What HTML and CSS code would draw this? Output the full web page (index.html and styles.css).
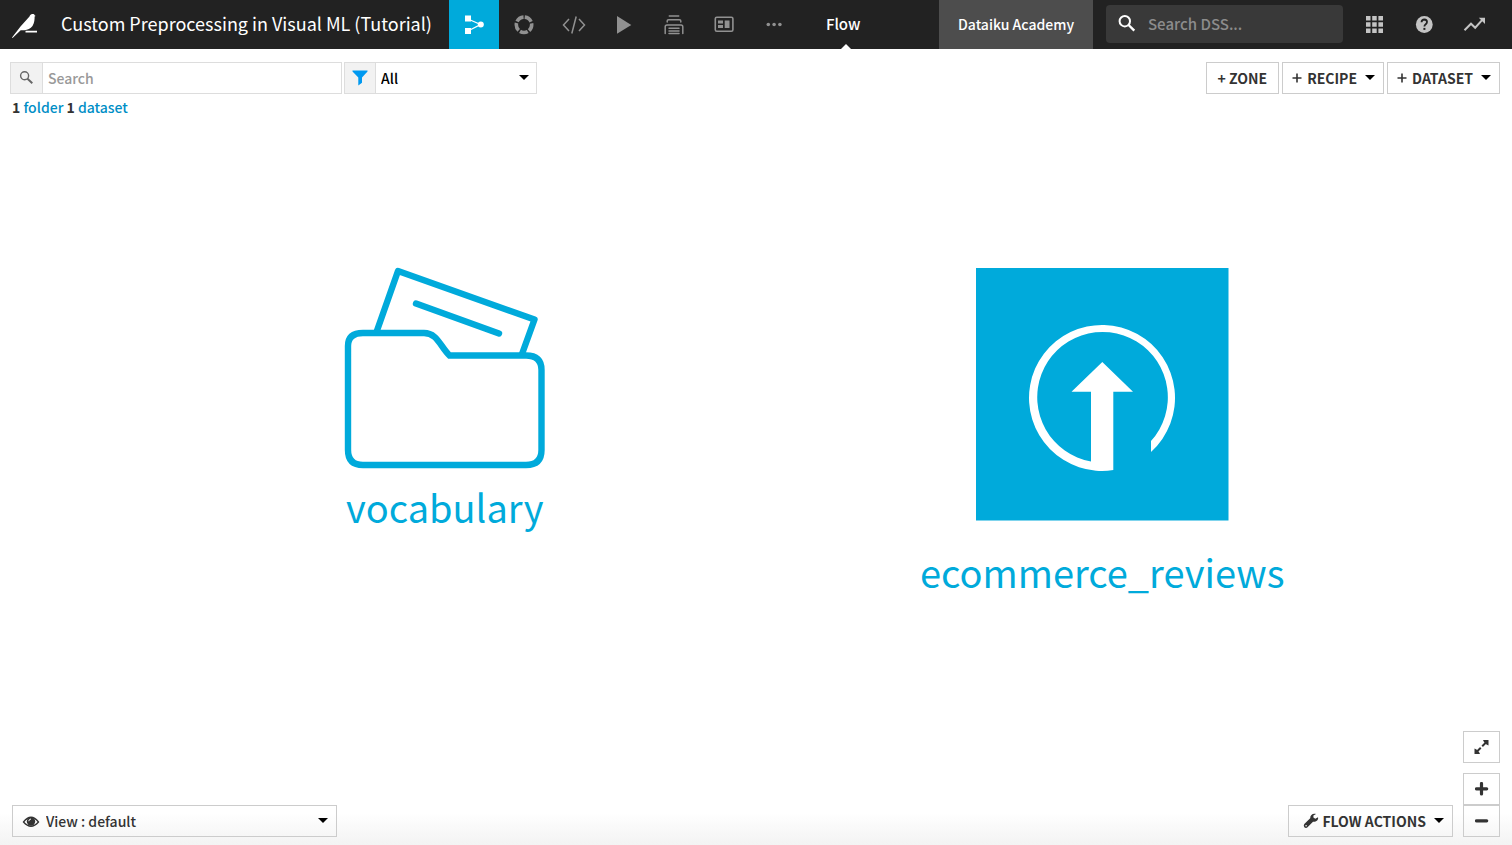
FILE: index.html
```html
<!DOCTYPE html>
<html lang="en">
<head>
<meta charset="utf-8">
<meta name="viewport" content="width=device-width, initial-scale=1">
<title>Custom Preprocessing in Visual ML (Tutorial)</title>
<link rel="stylesheet" href="styles.css">
</head>
<body>
<header class="topbar">
  <a class="logo" href="#" aria-label="Home">
    <svg width="26" height="26" viewBox="0 0 26 26" fill="#fff"><path d="M0 25.500L8.500 14.500L17.500 4.500C18 2.500 19.500 1.700 20.700 2C22 2 22.400 2.600 22.600 3.200L23.600 4L22.600 4.500C22.700 7 22.500 11 20.500 14C18.600 16.800 15.500 18 12.500 18.200L8.700 18.300L0.600 26ZM13.500 18.800H25V20.400H13.500Z"/></svg>
  </a>
  <h1 class="title">Custom Preprocessing in Visual ML (Tutorial)</h1>
  <nav class="tabs" aria-label="Project">
    <a class="tab active" href="#" aria-label="Flow">
      <svg width="20" height="20" viewBox="0 0 20 20"><path d="M4 4L16.500 9.500L4 16" fill="none" stroke="#fff" stroke-width="1.300"/><path d="M1 0.500H7V6.500H1ZM1 13H7V19H1Z" fill="#fff"/><circle cx="16.800" cy="9.600" r="3" fill="#fff"/></svg>
    </a>
    <a class="tab" href="#" aria-label="Lab">
      <svg width="20" height="20" viewBox="0 0 20 20"><circle cx="10" cy="9.800" r="7.700" fill="none" stroke="#919191" stroke-width="3.600" stroke-dasharray="8.100 1.576" stroke-dashoffset="-0.780" transform="rotate(-90 10 9.800)"/></svg>
    </a>
    <a class="tab" href="#" aria-label="Code">
      <svg width="24" height="20" viewBox="0 0 24 20" fill="none" stroke="#919191" stroke-width="1.500"><path d="M7 4L1.500 10L7 16M17 4L22.500 10L17 16M14.200 1.500L9.800 18.500"/></svg>
    </a>
    <a class="tab" href="#" aria-label="Jobs">
      <svg width="20" height="20" viewBox="0 0 20 20" fill="#919191"><path d="M3 1L17.300 9.900L3 18.800Z"/></svg>
    </a>
    <a class="tab" href="#" aria-label="Deployer">
      <svg width="20" height="20" viewBox="0 0 20 20" fill="none" stroke="#919191" stroke-width="1.500" stroke-linecap="round"><path d="M5.300 1H14.700M3.200 7V6Q3.200 4.800 4.500 4.800H15.500Q16.800 4.800 16.800 6V7M1.200 18.500V12Q1.200 10 3 10H17Q18.800 10 18.800 12V18.500M5 13.200H15M5 15.900H15M5 18.600H15"/></svg>
    </a>
    <a class="tab" href="#" aria-label="Dashboards">
      <svg width="20" height="20" viewBox="0 0 20 20"><rect x="1.300" y="2.300" width="17.600" height="13.900" rx="1.500" fill="none" stroke="#919191" stroke-width="1.600"/><path d="M4 5.500H9V8.500H4ZM4 10H9V13H4ZM10.700 5.500H15.500V13H10.700Z" fill="#919191"/></svg>
    </a>
    <a class="tab" href="#" aria-label="More">
      <svg width="20" height="20" viewBox="0 0 20 20" fill="#919191"><circle cx="4.300" cy="9.500" r="1.800"/><circle cx="10.100" cy="9.500" r="1.800"/><circle cx="15.900" cy="9.500" r="1.800"/></svg>
    </a>
  </nav>
  <a class="section" href="#">Flow</a>
  <a class="academy" href="#">Dataiku Academy</a>
  <label class="dss-search">
    <svg width="20" height="20" viewBox="0 0 20 20" fill="none" stroke="#fff" stroke-width="2"><circle cx="7.800" cy="7.200" r="5.200"/><path d="M11.600 11L17.300 16.700" stroke-width="2.400"/></svg>
    <input type="search" placeholder="Search DSS..." aria-label="Search DSS">
  </label>
  <div class="tools">
    <button class="tool" aria-label="Applications"><svg width="20" height="20" viewBox="0 0 20 20" fill="#c4c4c4"><path d="M2 1H6.500V5.500H2ZM8.200 1H12.700V5.500H8.200ZM14.400 1H19V5.500H14.400ZM2 7.200H6.500V11.700H2ZM8.200 7.200H12.700V11.700H8.200ZM14.400 7.200H19V11.700H14.400ZM2 13.400H6.500V17.900H2ZM8.200 13.400H12.700V17.900H8.200ZM14.400 13.400H19V17.900H14.400Z"/></svg></button>
    <button class="tool" aria-label="Help"><svg width="20" height="20" viewBox="0 0 20 20"><circle cx="10.300" cy="9.500" r="8.400" fill="#c4c4c4"/><path d="M7.500 7.200Q7.700 4.500 10.400 4.500Q13 4.700 13 7.100Q13 8.400 11.500 9.400Q10.400 10.100 10.400 11.600" fill="none" stroke="#222" stroke-width="1.800"/><path d="M9.400 12.900H11.400V14.900H9.400Z" fill="#222"/></svg></button>
    <button class="tool" aria-label="Activity"><svg width="22" height="20" viewBox="0 0 22 20"><path d="M1.500 15.200L8 8.700L12.200 12.700L19.500 4.700" fill="none" stroke="#c4c4c4" stroke-width="2"/><path d="M15.800 2.800H22V9Z" fill="#c4c4c4"/></svg></button>
  </div>
</header>

<main class="flow">
  <div class="toolbar">
    <div class="filters">
      <label class="field search">
        <span class="addon"><svg width="16" height="16" viewBox="0 0 16 16" fill="none" stroke="#666" stroke-width="1.400"><circle cx="5.600" cy="5.800" r="4"/><path d="M8.500 8.700L13.300 13.300" stroke-width="1.900"/></svg></span>
        <input type="text" placeholder="Search" aria-label="Search flow">
      </label>
      <div class="field type">
        <span class="addon"><svg width="16" height="16" viewBox="0 0 16 16" fill="#0099f0"><path d="M0.500 0.500H15.500V1.500L10 7.500V12.800L6.300 15.500V7.500L0.500 1.500Z"/></svg></span>
        <select aria-label="Filter by type"><option>All</option></select>
        <svg class="caret" width="10" height="5" viewBox="0 0 10 5"><path d="M0 0H10L5 5Z"/></svg>
      </div>
    </div>
    <div class="actions">
      <button class="btn"><span>+ ZONE</span></button>
      <button class="btn wide"><svg width="10" height="10" viewBox="0 0 10 10"><path d="M5 0.500V9.500M0.500 5H9.500" stroke="#333" stroke-width="1.600"/></svg><span>RECIPE</span><svg class="down" width="10" height="5" viewBox="0 0 10 5"><path d="M0 0H10L5 5Z"/></svg></button>
      <button class="btn wide"><svg width="10" height="10" viewBox="0 0 10 10"><path d="M5 0.500V9.500M0.500 5H9.500" stroke="#333" stroke-width="1.600"/></svg><span>DATASET</span><svg class="down" width="10" height="5" viewBox="0 0 10 5"><path d="M0 0H10L5 5Z"/></svg></button>
    </div>
  </div>
  <p class="summary"><b>1</b> <a href="#">folder</a> <b>1</b> <a href="#">dataset</a></p>

  <div class="graph">
    <a class="node folder" href="#">
      <svg width="202" height="202" viewBox="344 267 202 202" fill="none" stroke="#00aadb" stroke-width="6.400" stroke-linejoin="round"><path d="M376.500 332L398 271L534.500 319.500L522 354"/><path d="M416 303.500L499 333.500" stroke-linecap="round"/><path d="M348 346Q348 333 363 333H424C437 333 440 346 449.500 355.500H526Q541.500 355.500 541.500 370V450Q541.500 465 526 465H363Q348 465 348 450Z" stroke-linejoin="miter"/></svg>
      <span>vocabulary</span>
    </a>
    <a class="node dataset" href="#">
      <svg width="253" height="253" viewBox="0 0 253 253"><path d="M0 0H252.500V252.500H0Z" fill="#00aadb"/><path d="M175 184V173A65.300 65.300 0 1 0 115 193.500V123.700H95.500L126.300 94L157 123.700H137.300V202A73 73 0 1 1 175 184Z" fill="#fff"/></svg>
      <span>ecommerce_reviews</span>
    </a>
  </div>

  <footer class="bottom">
    <div class="view">
      <svg class="eye" width="18" height="14" viewBox="0 0 18 14"><path d="M1.500 7Q9 -2.500 16.500 7Q9 15.500 1.500 7Z" fill="none" stroke="#333" stroke-width="1.300"/><circle cx="9" cy="6.500" r="4.200" fill="#333"/><path d="M6.800 6.200Q6.900 4.200 9 4" fill="none" stroke="#fff"/></svg>
      <select aria-label="View"><option>View : default</option></select>
      <svg class="caret" width="10" height="5" viewBox="0 0 10 5"><path d="M0 0H10L5 5Z"/></svg>
    </div>
    <div class="controls">
      <button class="btn flow-actions"><svg width="16" height="16" viewBox="0 0 16 16"><path d="M15 4.200L12.300 5.700L10.400 4.500V2.500L13 1C10.200 0.100 7.100 1.600 7.200 5.200L1.300 11Q0.200 12.500 1.300 14.200Q3 15.500 4.500 14.300L10 8.800C13.500 9 15.700 6.700 15 4.200ZM3.900 12.700A0.800 0.800 0 1 1 2.300 12.700A0.800 0.800 0 1 1 3.900 12.700Z" fill="#333" fill-rule="evenodd"/></svg><span>FLOW ACTIONS</span><svg class="down" width="10" height="5" viewBox="0 0 10 5"><path d="M0 0H10L5 5Z"/></svg></button>
      <div class="zoom">
        <button class="btn fit" aria-label="Fit to screen"><svg width="16" height="16" viewBox="0 0 16 16"><path d="M2.500 13L12.500 3" stroke="#333" stroke-width="2" stroke-dasharray="6 2.100"/><path d="M9 1H14.500V6.500L12.500 5.500L10 3ZM0.500 9.500L2.500 10.500L5 13L6 15H0.500Z" fill="#333"/></svg></button>
        <button class="btn" aria-label="Zoom in"><svg width="14" height="14" viewBox="0 0 14 14"><path d="M6.500 1.500V12M1.500 6.800H11.700" stroke="#333" stroke-width="3.200" stroke-linecap="round"/></svg></button>
        <button class="btn out" aria-label="Zoom out"><svg width="14" height="14" viewBox="0 0 14 14"><path d="M1.500 6.800H11.700" stroke="#333" stroke-width="3.200" stroke-linecap="round"/></svg></button>
      </div>
    </div>
  </footer>
</main>
</body>
</html>
```
FILE: styles.css
```css
* { box-sizing: border-box; }
body {
  margin: 0;
  min-height: 100vh;
  display: flex;
  flex-direction: column;
  font: 500 14px/20px "Noto Sans CJK SC", "Noto Sans", sans-serif;
  color: #333;
  background: #fff;
}
svg { display: block; flex: none; }
a { text-decoration: none; }
button, input, select { font: inherit; color: inherit; margin: 0; }
button { cursor: pointer; }
input, select { appearance: none; border: 0; background: transparent; min-width: 0; border-radius: 0; }

.topbar { display: flex; height: 49px; background: #222; color: #fff; }
.logo { display: flex; align-items: center; padding: 0 12px; }
.title {
  margin: 0;
  padding: 0 17px 0 11px;
  font-size: 18px;
  font-weight: 400;
  line-height: 47px;
  white-space: nowrap;
}
.tabs { display: flex; }
.tab { width: 50px; display: flex; align-items: center; justify-content: center; }
.tab.active { background: #00aadb; }
.section { position: relative; margin-left: 27px; color: #fff; font-size: 15px; line-height: 47px; }
.section::after {
  content: "";
  position: absolute;
  left: calc(50% - 2px);
  bottom: 0;
  border: 5px solid transparent;
  border-top: 0;
  border-bottom-color: #fff;
}
.academy { margin-left: auto; padding: 0 19px; background: #4d4d4d; color: #fff; line-height: 49px; white-space: nowrap; }
.dss-search {
  display: flex;
  align-items: center;
  gap: 11px;
  width: 237px;
  height: 38px;
  margin: 5px 6px 0 13px;
  padding-left: 11px;
  border-radius: 4px;
  background: #393939;
}
.dss-search input { flex: 1; padding: 0; outline: 0; font-size: 15px; }
.dss-search input::placeholder { color: #8c8c8c; }
.tools { display: flex; padding-right: 13px; }
.tool { width: 50px; padding: 0; border: 0; background: none; display: flex; align-items: center; justify-content: center; }

.flow { flex: 1; display: flex; flex-direction: column; background: linear-gradient(to top, #f3f3f3, #fff 32px); }
.toolbar { display: flex; justify-content: space-between; padding: 13px 12px 0 10px; }
.filters { display: flex; gap: 2px; }
.field { display: flex; position: relative; height: 32px; border: 1px solid #ddd; background: #fff; }
.search { width: 332px; }
.type { width: 193px; color: #000; }
.addon { display: flex; align-items: center; justify-content: center; width: 32px; background: #f2f2f2; border-right: 1px solid #ddd; }
.type .addon { width: 31px; }
.field input, .field select { flex: 1; padding: 0 5px; }
.field input::placeholder { color: #999; }
.caret { position: absolute; right: 8px; top: 12px; pointer-events: none; }
.type .caret { right: 7px; }
.actions { display: flex; gap: 3px; }
.btn {
  display: flex;
  align-items: center;
  justify-content: center;
  height: 32px;
  padding: 0 11px;
  border: 1px solid #ccc;
  background: transparent;
  font-weight: 700;
  white-space: nowrap;
}
.wide { gap: 5px; padding: 0 8px 0 9px; }
.down { margin: 0 0 2px 3px; }
.summary { margin: 3px 0 0; padding-left: 12px; }
.summary a { color: #008ec6; }

.graph { flex: 1; display: grid; grid-template-columns: 1fr 1fr; padding: 150px 81px 0 116px; }
.node { display: flex; flex-direction: column; align-items: center; justify-self: center; align-self: start; color: #00aadb; font-size: 38px; font-weight: 400; line-height: 50px; }
.folder span { margin-top: 13px; }
.dataset { padding-top: 1px; }
.dataset span { margin-top: 26px; }

.bottom { display: flex; justify-content: space-between; align-items: flex-end; padding: 0 12px 8px; }
.view { display: flex; position: relative; width: 325px; height: 32px; border: 1px solid #ccc; }
.view select { flex: 1; padding: 0 0 0 33px; }
.eye { position: absolute; left: 9px; top: 9px; pointer-events: none; }
.controls { display: flex; align-items: flex-end; gap: 10px; }
.flow-actions { gap: 3px; padding: 0 8px 0 14px; }
.flow-actions .down { margin-left: 5px; }
.zoom { display: flex; flex-direction: column; }
.zoom .btn { width: 37px; padding: 0; }
.zoom .fit { margin-bottom: 10px; }
```
